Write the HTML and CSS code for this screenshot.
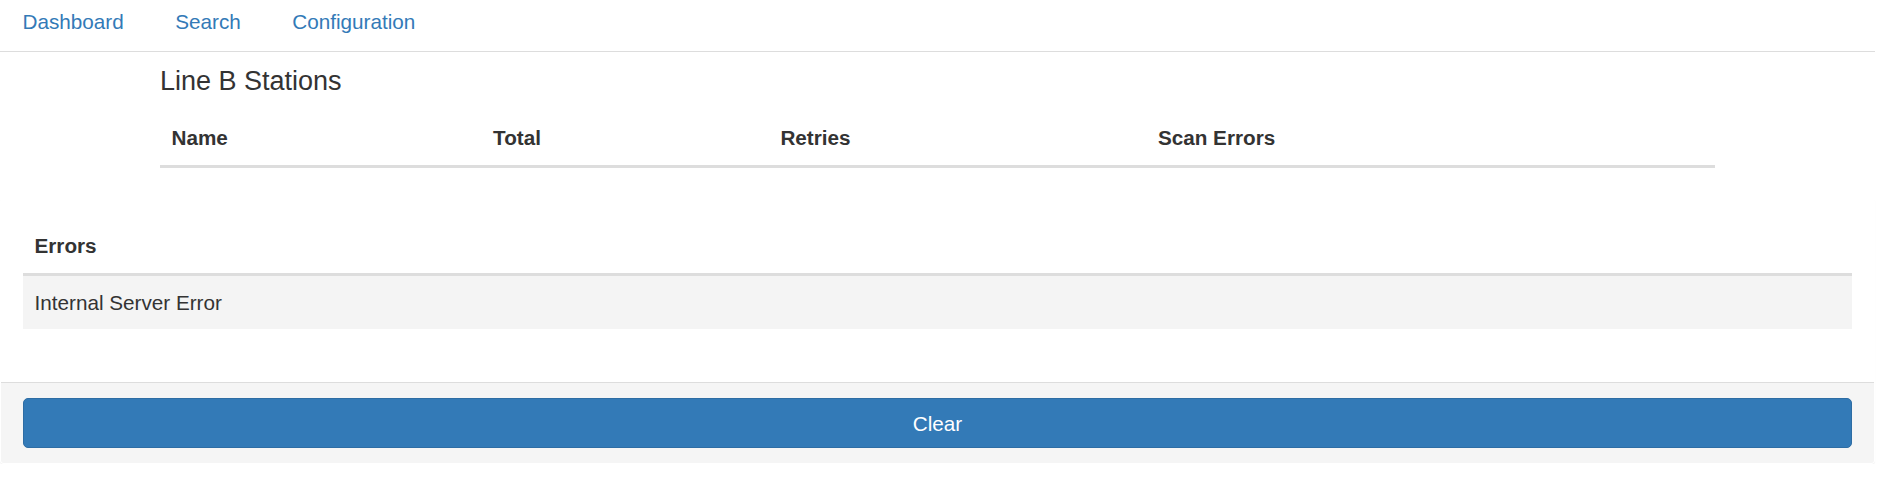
FILE: index.html
```html
<!DOCTYPE html>
<html lang="en">
<head>
<meta charset="utf-8">
<title>Line B Stations</title>
<link rel="stylesheet" href="styles.css">
</head>
<body>
<div class="page">
  <nav class="topnav">
    <a class="nav-link" href="#">Dashboard</a>
    <a class="nav-link" href="#">Search</a>
    <a class="nav-link" href="#">Configuration</a>
  </nav>

  <section class="stations">
    <h3 class="section-title">Line B Stations</h3>
    <table class="data-table">
      <thead>
        <tr>
          <th>Name</th>
          <th>Total</th>
          <th>Retries</th>
          <th>Scan Errors</th>
        </tr>
      </thead>
      <tbody></tbody>
    </table>
  </section>

  <div class="panel">
    <div class="panel-body">
      <table class="data-table errors-table">
        <thead>
          <tr><th>Errors</th></tr>
        </thead>
        <tbody>
          <tr class="row-active"><td>Internal Server Error</td></tr>
        </tbody>
      </table>
    </div>
    <div class="panel-footer">
      <button class="btn-primary" type="button">Clear</button>
    </div>
  </div>
</div>
</body>
</html>
```

FILE: styles.css
```css
html, body {
  margin: 0;
  padding: 0;
  background: #fff;
}

body {
  font-family: "Liberation Sans", Arial, Helvetica, sans-serif;
  font-size: 20.7px;
  color: #333;
}

.page {
  margin-right: 4px;
}

.topnav {
  display: flex;
  align-items: flex-start;
  box-sizing: border-box;
  height: 52px;
  padding: 10px 0 0 22.5px;
  gap: 51.5px;
  border-bottom: 1px solid #ddd;
}

.nav-link {
  color: #337ab7;
  text-decoration: none;
  line-height: 23px;
}

.stations {
  width: 1555px;
  margin: 0 auto;
}

.section-title {
  margin: 14.5px 0 15px;
  font-size: 27px;
  font-weight: 400;
  line-height: 1.1;
  color: #333;
}

.data-table {
  width: 100%;
  border-collapse: collapse;
  border-spacing: 0;
  margin-bottom: 30.5px;
}

.data-table th,
.data-table td {
  padding: 12px 11.5px;
  line-height: 29.6px;
  text-align: left;
  vertical-align: bottom;
}

.data-table th {
  font-weight: 700;
  border-bottom: 3px solid #ddd;
}

.errors-table {
  margin-bottom: 31px;
}

.row-active td {
  background: #f4f4f4;
}

.panel {
  border: 1px solid transparent;
  border-radius: 4px;
  box-shadow: 0 1px 1px rgba(0, 0, 0, 0.06);
  background: #fff;
}

.panel-body {
  padding: 20px 22px 22px;
}

.panel-footer {
  padding: 15px 22px;
  background: #f5f5f5;
  border-top: 1px solid #ddd;
  border-radius: 0 0 3px 3px;
}

.btn-primary {
  display: block;
  width: 100%;
  box-sizing: border-box;
  height: 50px;
  padding: 0 12px;
  font-family: inherit;
  font-size: 20.7px;
  line-height: 29.6px;
  color: #fff;
  background: #337ab7;
  border: 1px solid #2e6da4;
  border-radius: 5px;
  cursor: pointer;
}
```
